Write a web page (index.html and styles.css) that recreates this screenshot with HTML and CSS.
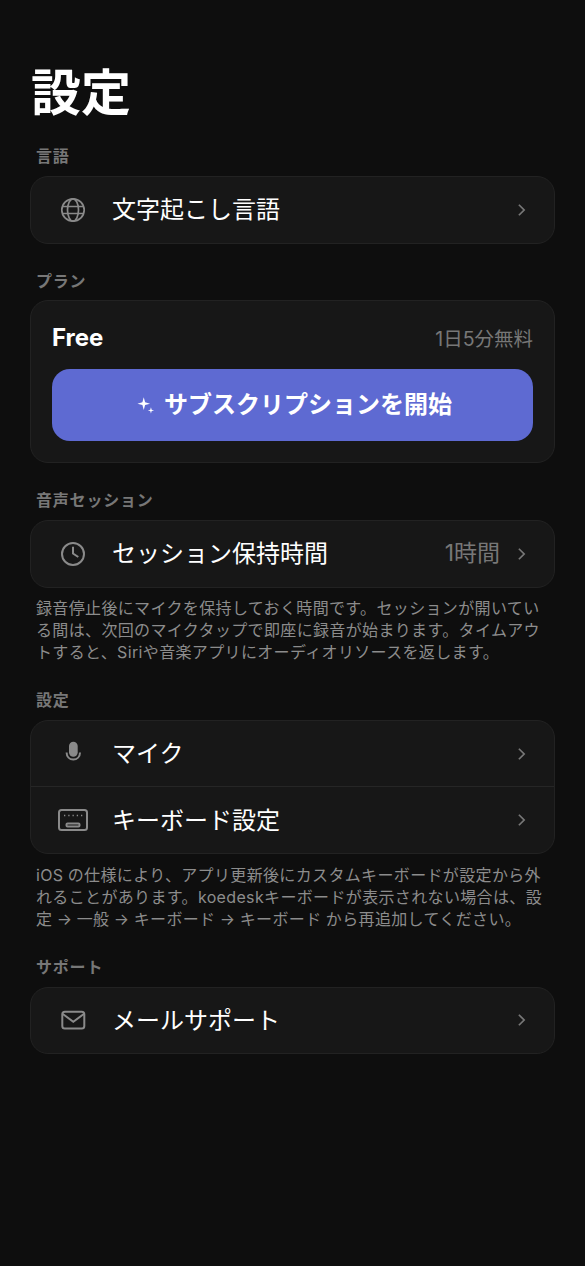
FILE: index.html
```html
<!DOCTYPE html>
<html lang="ja">
  <head>
    <meta charset="utf-8">
    <title>設定</title>
    <link rel="stylesheet" href="styles.css">
  </head>
  <body>
    <h1 class="title">設定</h1>

    <h2 class="section-label">言語</h2>
    <div class="card">
      <div class="row">
        <svg class="row-icon" viewBox="0 0 28 28"><circle class="thin" cx="14" cy="14" r="11.2"/><ellipse class="thin" cx="14" cy="14" rx="5.5" ry="11.2"/><path class="thin" d="M3.500 10.500h21M3.500 17.500h21"/></svg>
        <span class="row-text">文字起こし言語</span>
        <svg class="chevron" viewBox="0 0 10 16"><path d="M2 2l6 6-6 6"/></svg>
      </div>
    </div>

    <h2 class="section-label">プラン</h2>
    <div class="card plan-card">
      <div class="plan-head">
        <span class="plan-name">Free</span>
        <span class="plan-limit">1日5分無料</span>
      </div>
      <div class="subscribe-button">
        <svg class="sparkle" viewBox="0 0 20 20"><path d="M7.500 1.500 9 7l5.500 1.500L9 10l-1.500 5.500L6 10 .5 8.500 6 7zM15.500 12.500l.8 2.700 2.700.8-2.700.8-.8 2.700-.8-2.700-2.700-.8 2.700-.8z"/></svg>
        <span class="button-text">サブスクリプションを開始</span>
      </div>
    </div>

    <h2 class="section-label">音声セッション</h2>
    <div class="card">
      <div class="row">
        <svg class="row-icon" viewBox="0 0 28 28"><circle cx="14" cy="14" r="11"/><path d="M14 6.700V13.500l5.300 3.500"/></svg>
        <span class="row-text">セッション保持時間</span>
        <span class="row-value">1時間</span>
        <svg class="chevron" viewBox="0 0 10 16"><path d="M2 2l6 6-6 6"/></svg>
      </div>
    </div>
    <p class="note">録音停止後にマイクを保持しておく時間です。セッションが開いている間は、次回のマイクタップで即座に録音が始まります。タイムアウトすると、Siriや音楽アプリにオーディオリソースを返します。</p>

    <h2 class="section-label">設定</h2>
    <div class="card">
      <div class="row row-top">
        <svg class="row-icon" viewBox="0 0 28 28"><rect class="solid" x="10" y="1.700" width="8.700" height="15" rx="4.350"/><path d="M7.600 12.500c0 4.300 3 7 6.700 7s6.700-2.700 6.700-7"/></svg>
        <span class="row-text">マイク</span>
        <svg class="chevron" viewBox="0 0 10 16"><path d="M2 2l6 6-6 6"/></svg>
      </div>
      <div class="row row-divided">
        <svg class="row-icon keyboard-icon" viewBox="0 0 30 22"><rect x="1" y="1" width="28" height="20" rx="2.500"/><rect x="8.500" y="14.500" width="13" height="3" rx="1"/><path class="keys" d="M6 6.500h18.500"/></svg>
        <span class="row-text">キーボード設定</span>
        <svg class="chevron" viewBox="0 0 10 16"><path d="M2 2l6 6-6 6"/></svg>
      </div>
    </div>
    <p class="note">iOS の仕様により、アプリ更新後にカスタムキーボードが設定から外れることがあります。koedeskキーボードが表示されない場合は、設定 → 一般 → キーボード → キーボード から再追加してください。</p>

    <h2 class="section-label">サポート</h2>
    <div class="card">
      <div class="row">
        <svg class="row-icon" viewBox="0 0 28 28"><rect x="3.300" y="5.700" width="22" height="16.700" rx="2.500"/><path d="M3.800 8l10.500 7.700L24.800 8"/></svg>
        <span class="row-text">メールサポート</span>
        <svg class="chevron" viewBox="0 0 10 16"><path d="M2 2l6 6-6 6"/></svg>
      </div>
    </div>
  </body>
</html>
```

FILE: styles.css
```css
body {
  background: #0e0e0e;
  color: #fff;
  font-family: Inter, "Noto Sans CJK JP", sans-serif;
  margin: 0;
  padding: 62px 30px 0;
}

.title {
  font-size: 50px;
  font-weight: 700;
  line-height: 62px;
  margin: 0 0 22px 1px;
}

.section-label {
  color: #777;
  font-size: 16px;
  font-weight: 700;
  letter-spacing: 0.8px;
  line-height: 20px;
  margin: 27px 6px 10px;
}

.title + .section-label {
  margin-top: 0;
}

.card {
  background: #171717;
  border: 1px solid #222;
  border-radius: 18px;
}

.row {
  align-items: center;
  display: flex;
  height: 65.5px;
  padding: 0 28px;
}

.row-top {
  height: 65px;
}

.row-divided {
  border-top: 1px solid #262626;
  height: 66px;
}

.row-icon {
  fill: none;
  flex: none;
  height: 28px;
  stroke: #8a8a8a;
  stroke-width: 2;
  width: 28px;
}

.row-icon .solid {
  fill: #8a8a8a;
  stroke: none;
}

.row-icon .thin {
  stroke-width: 1.7;
}

.keyboard-icon {
  height: 22px;
  margin-left: -1px;
  margin-right: -1px;
  width: 30px;
}

.keyboard-icon .keys {
  stroke-dasharray: 1.300 2.950;
  stroke-width: 1.500;
}

.row-text {
  flex: 1;
  font-size: 24px;
  margin-left: 25px;
  padding-bottom: 4px;
}

.row-value {
  color: #777;
  font-size: 23px;
  margin-right: 17px;
  padding-bottom: 5px;
}

.chevron {
  fill: none;
  flex: none;
  height: 14px;
  stroke: #777;
  stroke-width: 2;
  width: 9px;
}

.plan-card {
  margin-top: -0.5px;
  padding: 20.500px 21px 21px;
}

.plan-head {
  align-items: center;
  box-sizing: border-box;
  display: flex;
  height: 35.5px;
  justify-content: space-between;
  margin-bottom: 12px;
  padding-bottom: 4px;
}

.plan-name {
  font-size: 24px;
  font-weight: 700;
}

.plan-limit {
  color: #777;
  font-size: 19.500px;
}

.subscribe-button {
  align-items: center;
  background: #5e6ad2;
  border-radius: 18px;
  display: flex;
  font-size: 24px;
  font-weight: 700;
  gap: 9px;
  height: 72px;
  justify-content: center;
  padding-left: 4px;
}

.button-text {
  padding-bottom: 6px;
}

.sparkle {
  fill: #fff;
  height: 18px;
  width: 18px;
}

.note {
  color: #8c8c8c;
  font-size: 16px;
  letter-spacing: 0.35px;
  line-height: 22px;
  margin: 9.500px 6px 0;
  word-spacing: -0.5px;
}
```
